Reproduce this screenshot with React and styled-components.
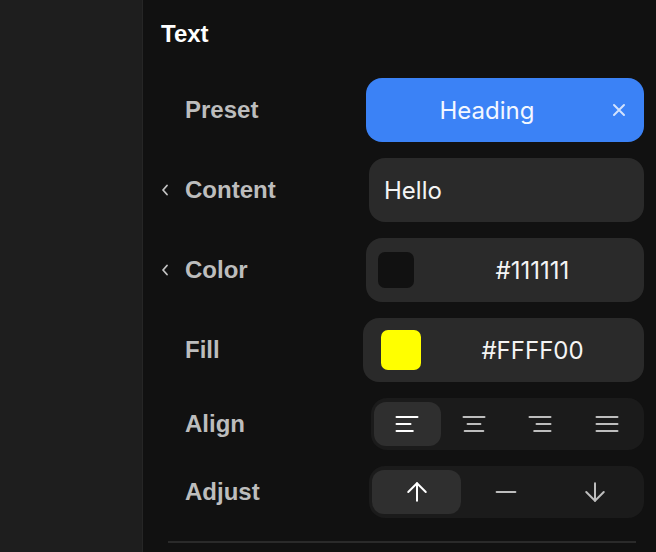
import React from "react";
import styled, { createGlobalStyle } from "styled-components";

const GlobalStyle = createGlobalStyle`
  html, body {
    margin: 0;
    padding: 0;
    background: #111111;
  }
`;

const Page = styled.div`
  display: flex;
  width: 656px;
  height: 552px;
  overflow: hidden;
  background: #111111;
`;

const Sidebar = styled.div`
  width: 142px;
  flex-shrink: 0;
  background: #1e1e1e;
  border-right: 1px solid #262626;
`;

const Panel = styled.div`
  flex: 1;
  display: flex;
  flex-direction: column;
  padding: 20px 12px 0 18px;
`;

const Heading = styled.h2`
  margin: 0 0 30px;
  font-family: "Liberation Sans", Arial, sans-serif;
  font-size: 24px;
  line-height: 28px;
  font-weight: 700;
  color: #ffffff;
`;

const Rows = styled.div`
  display: flex;
  flex-direction: column;
  gap: 16px;
`;

const Row = styled.div`
  display: flex;
  align-items: center;
  height: ${(p) => p.$height}px;
`;

const Label = styled.div`
  display: flex;
  align-items: center;
  width: 202px;
  flex-shrink: 0;
  font-family: "Liberation Sans", Arial, sans-serif;
  font-size: 24px;
  line-height: 28px;
  font-weight: 700;
  color: #bdbdbd;
`;

const Chevron = styled.span`
  display: flex;
  align-items: center;
  width: 24px;
  flex-shrink: 0;
`;

const Field = styled.div`
  flex: 1;
  display: flex;
  align-items: center;
  height: 64px;
  margin-left: ${(p) => p.$inset}px;
  padding-left: ${(p) => p.$pad || 0}px;
  border-radius: 16px;
  background: ${(p) => (p.$accent ? "#3b82f6" : "#2a2a2a")};
  font-family: Inter, "Noto Sans", sans-serif;
  font-size: 24px;
  color: #f4f4f4;
`;

const FieldText = styled.span`
  flex: 1;
  text-align: ${(p) => (p.$left ? "left" : "center")};
  padding-left: ${(p) => p.$nudge || 0}px;
  color: ${(p) => (p.$accent ? "#f3f7ff" : "#f4f4f4")};
`;

const Clear = styled.span`
  display: flex;
  margin: 0 18px 0 4px;
`;

const Swatch = styled.span`
  width: ${(p) => p.$size}px;
  height: ${(p) => p.$size}px;
  border-radius: 7px;
  background: ${(p) => p.$color};
  flex-shrink: 0;
`;

const Segmented = styled.div`
  flex: 1;
  display: flex;
  height: 52px;
  margin-left: ${(p) => p.$inset}px;
  padding: 4px 4px 4px 3px;
  box-sizing: border-box;
  border-radius: 16px;
  background: #1b1b1b;
`;

const Segment = styled.button`
  flex: 1;
  display: flex;
  align-items: center;
  justify-content: center;
  border: 0;
  padding: 0;
  border-radius: 12px;
  background: ${(p) => (p.$active ? "#2f2f2f" : "transparent")};
  color: ${(p) => (p.$active ? "#ffffff" : "#bdbdbd")};
  cursor: pointer;
`;

const Divider = styled.div`
  height: 2px;
  margin: 23px 8px 0 7px;
  background: #2a2a2a;
`;

const ChevronIcon = () => (
  <svg width="8" height="12" viewBox="0 0 8 12" fill="none">
    <path d="M6 1.5 2 6l4 4.5" stroke="#c4c4c4" strokeWidth="1.8" strokeLinecap="round" strokeLinejoin="round" />
  </svg>
);

const CloseIcon = () => (
  <svg width="14" height="14" viewBox="0 0 14 14" fill="none">
    <path d="M2 2l10 10M12 2 2 12" stroke="#d2e2fd" strokeWidth="2" strokeLinecap="round" />
  </svg>
);

const alignLines = {
  left: [[3, 21, 6], [3, 15, 12], [3, 17, 18]],
  center: [[3, 21, 6], [6.5, 17.5, 12], [4, 20, 18]],
  right: [[3, 21, 6], [9, 21, 12], [7, 21, 18]],
  justify: [[3, 21, 6], [3, 21, 12], [3, 21, 18]],
};

const AlignIcon = ({ kind }) => (
  <svg width="28" height="28" viewBox="0 0 24 24" fill="none" stroke="currentColor" strokeWidth="1.7" strokeLinecap="round">
    {alignLines[kind].map(([x1, x2, y]) => (
      <path key={y} d={`M${x1} ${y}H${x2}`} />
    ))}
  </svg>
);

const adjustPaths = {
  up: ["M5 12l7-7 7 7", "M12 19V5"],
  middle: ["M4.5 12h15"],
  down: ["M5 12l7 7 7-7", "M12 5v14"],
};

const AdjustIcon = ({ kind }) => (
  <svg width="30" height="30" viewBox="0 0 24 24" fill="none" stroke="currentColor" strokeWidth="1.6" strokeLinecap="round" strokeLinejoin="round">
    {adjustPaths[kind].map((d) => (
      <path key={d} d={d} />
    ))}
  </svg>
);

const RowLabel = ({ text, chevron }) => (
  <Label>
    <Chevron>{chevron && <ChevronIcon />}</Chevron>
    {text}
  </Label>
);

export default function App() {
  return (
    <Page>
      <GlobalStyle />
      <Sidebar />
      <Panel>
        <Heading>Text</Heading>
        <Rows>
          <Row $height={64}>
            <RowLabel text="Preset" />
            <Field $inset={3} $accent>
              <FieldText $accent>Heading</FieldText>
              <Clear>
                <CloseIcon />
              </Clear>
            </Field>
          </Row>
          <Row $height={64}>
            <RowLabel text="Content" chevron />
            <Field $inset={6} $pad={15}>
              <FieldText $left>Hello</FieldText>
            </Field>
          </Row>
          <Row $height={64}>
            <RowLabel text="Color" chevron />
            <Field $inset={3} $pad={12}>
              <Swatch $size={36} $color="#111111" />
              <FieldText $nudge={7}>#111111</FieldText>
            </Field>
          </Row>
          <Row $height={64}>
            <RowLabel text="Fill" />
            <Field $inset={0} $pad={18}>
              <Swatch $size={40} $color="#ffff00" />
              <FieldText>#FFFF00</FieldText>
            </Field>
          </Row>
          <Row $height={52}>
            <RowLabel text="Align" />
            <Segmented $inset={8}>
              {["left", "center", "right", "justify"].map((k) => (
                <Segment key={k} $active={k === "left"}>
                  <AlignIcon kind={k} />
                </Segment>
              ))}
            </Segmented>
          </Row>
          <Row $height={52}>
            <RowLabel text="Adjust" />
            <Segmented $inset={6}>
              {["up", "middle", "down"].map((k) => (
                <Segment key={k} $active={k === "up"}>
                  <AdjustIcon kind={k} />
                </Segment>
              ))}
            </Segmented>
          </Row>
        </Rows>
        <Divider />
      </Panel>
    </Page>
  );
}
